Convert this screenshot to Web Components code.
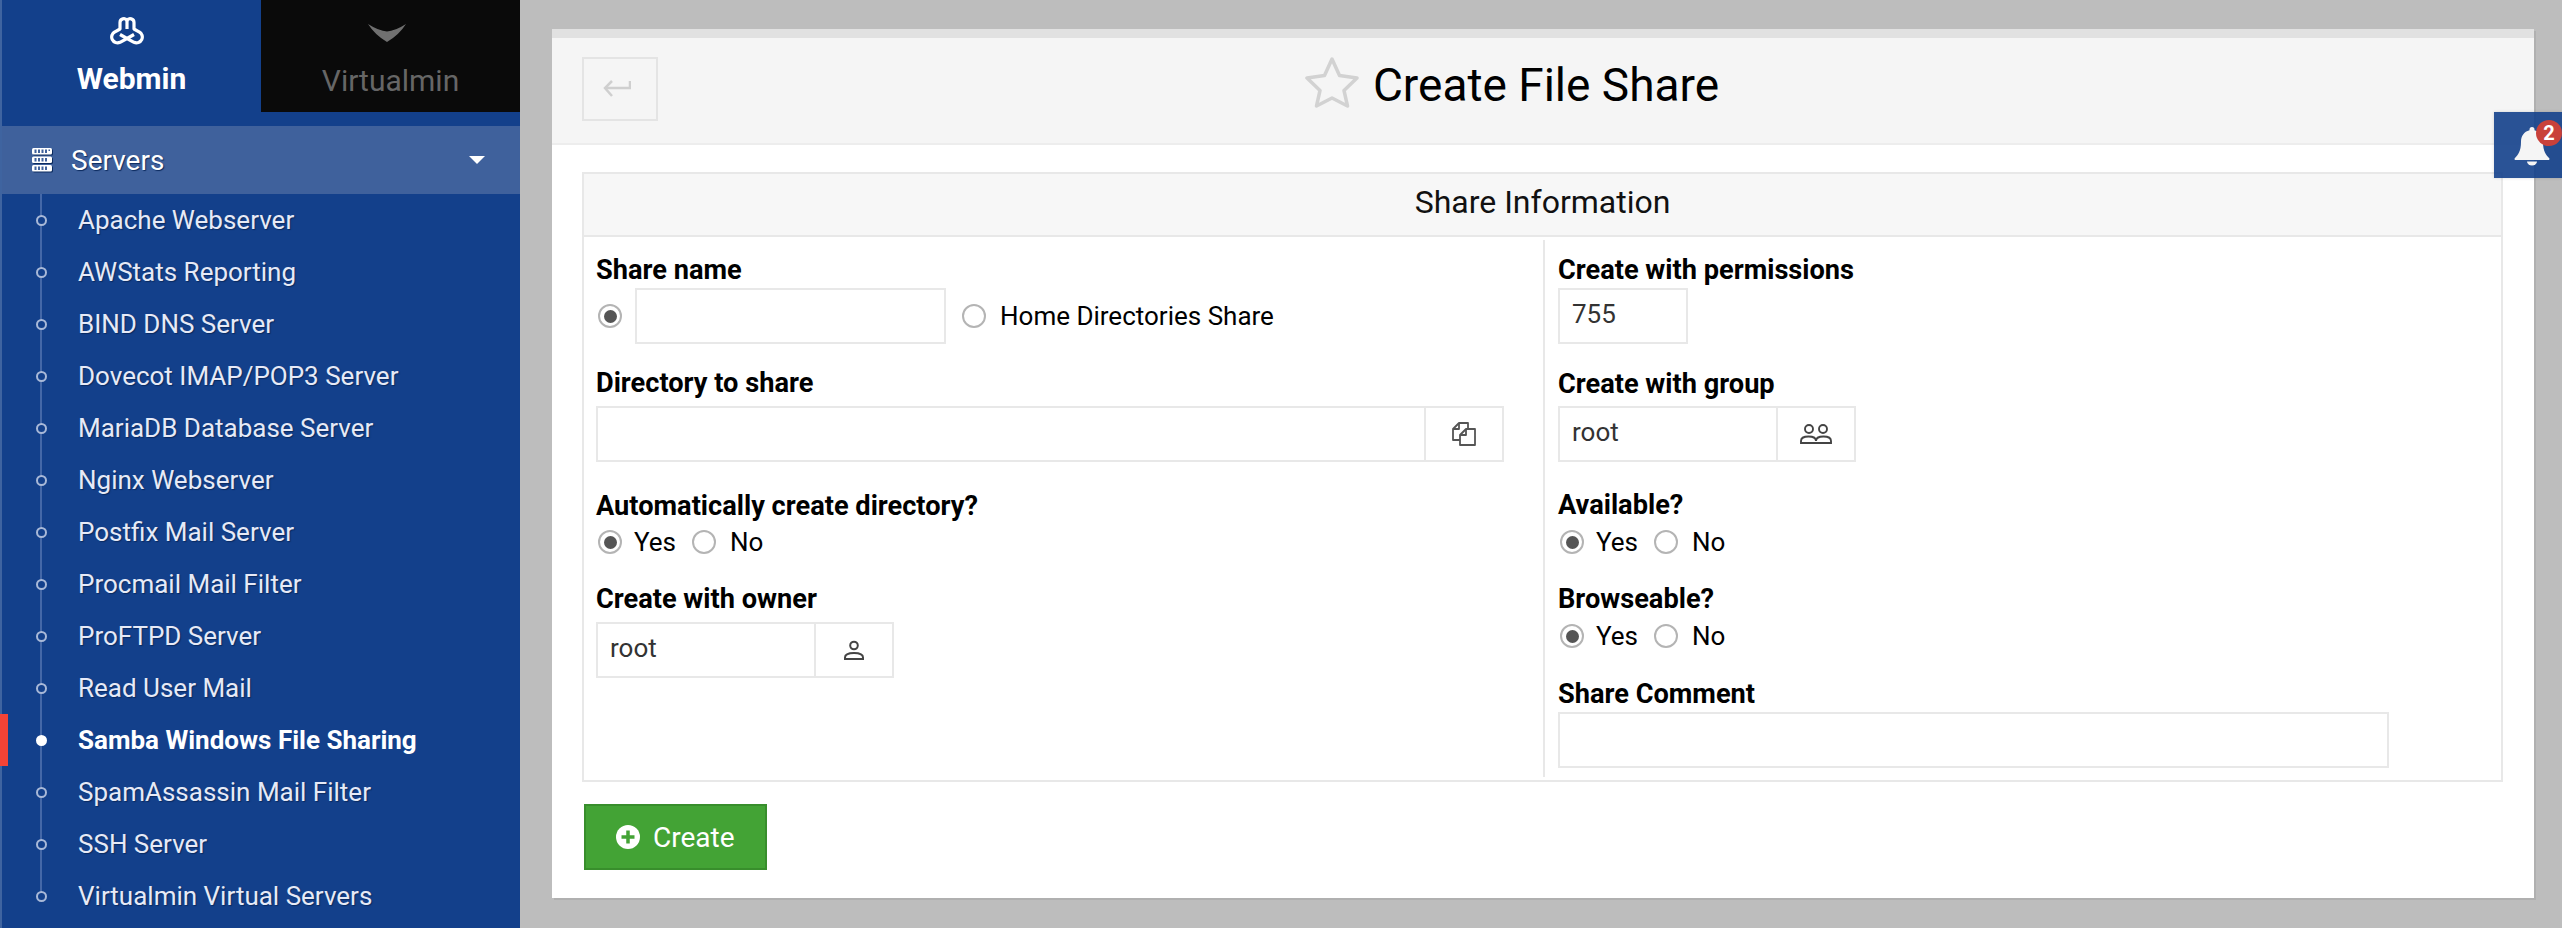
<!DOCTYPE html>
<html><head><meta charset="utf-8"><title>Create File Share</title>
<style>
html,body{margin:0;padding:0;height:928px;overflow:hidden;background:#bdbdbd;font-family:Roboto,"Liberation Sans",sans-serif;font-size:26px}
</style></head><body>
<wm-app>
  <wm-sidebar slot="side">
    <wm-tab slot="tabs" active label="Webmin"><svg style="margin-right:10px" viewBox="0 0 34 31" width="34" height="31" fill="none" stroke="#fff" stroke-width="3.2" stroke-linejoin="round"><path d="M10 13V6.500a3.800 3.800 0 0 1 7-2 3.800 3.800 0 0 1 7 2V13l5 2.800A5.500 5.500 0 0 1 24 26.300L17 22.500 10 26.300A5.500 5.500 0 0 1 5 15.800z"/><path d="M17 4.500V13"/><path d="M10 18.500l7 4 7-4"/></svg></wm-tab>
    <wm-tab slot="tabs" label="Virtualmin"><svg style="margin-right:8px" viewBox="0 0 38 19" width="38" height="19"><path d="M0 1 Q11 8 19 8.500 Q27 8 38 1 Q31 12 19 19 Q7 12 0 1z" fill="#707070"/></svg></wm-tab>
    <wm-nav-head slot="head">Servers</wm-nav-head>
    <wm-nav-item>Apache Webserver</wm-nav-item>
    <wm-nav-item>AWStats Reporting</wm-nav-item>
    <wm-nav-item>BIND DNS Server</wm-nav-item>
    <wm-nav-item>Dovecot IMAP/POP3 Server</wm-nav-item>
    <wm-nav-item>MariaDB Database Server</wm-nav-item>
    <wm-nav-item>Nginx Webserver</wm-nav-item>
    <wm-nav-item>Postfix Mail Server</wm-nav-item>
    <wm-nav-item>Procmail Mail Filter</wm-nav-item>
    <wm-nav-item>ProFTPD Server</wm-nav-item>
    <wm-nav-item>Read User Mail</wm-nav-item>
    <wm-nav-item active>Samba Windows File Sharing</wm-nav-item>
    <wm-nav-item>SpamAssassin Mail Filter</wm-nav-item>
    <wm-nav-item>SSH Server</wm-nav-item>
    <wm-nav-item>Virtualmin Virtual Servers</wm-nav-item>
  </wm-sidebar>
  <wm-card heading="Create File Share">
    <wm-section heading="Share Information">
      <div slot="left">
        <wm-field label="Share name" style="--gap:4px;--after:23px">
          <wm-row>
            <wm-radio checked style="--l:2px"></wm-radio>
            <wm-input style="--w:311px;margin:0 16px 0 13px"></wm-input>
            <wm-radio></wm-radio>
            <wm-text style="margin-left:14px">Home Directories Share</wm-text>
          </wm-row>
        </wm-field>
        <wm-field label="Directory to share" style="--gap:9px;--after:28px">
          <wm-input style="--w:908px" icon="copy"></wm-input>
        </wm-field>
        <wm-field label="Automatically create directory?" style="--gap:7px;--after:26px">
          <wm-yesno></wm-yesno>
        </wm-field>
        <wm-field label="Create with owner" style="--gap:9px;--after:0px">
          <wm-input style="--w:298px" icon="user" value="root"></wm-input>
        </wm-field>
      </div>
      <div slot="right">
        <wm-field label="Create with permissions" style="--gap:4px;--after:24px">
          <wm-input style="--w:130px" value="755"></wm-input>
        </wm-field>
        <wm-field label="Create with group" style="--gap:8px;--after:27px">
          <wm-input style="--w:298px" icon="group" value="root"></wm-input>
        </wm-field>
        <wm-field label="Available?" style="--gap:8px;--after:26px">
          <wm-yesno></wm-yesno>
        </wm-field>
        <wm-field label="Browseable?" style="--gap:8px;--after:27px">
          <wm-yesno></wm-yesno>
        </wm-field>
        <wm-field label="Share Comment" style="--gap:4px;--after:0px">
          <wm-input style="--w:831px"></wm-input>
        </wm-field>
      </div>
    </wm-section>
    <wm-button>Create</wm-button>
  </wm-card>
  <wm-bell count="2"></wm-bell>
</wm-app>
<script>
function def(name, css, html){
  customElements.define(name, class extends HTMLElement{
    constructor(){super();this.attachShadow({mode:'open'});}
    connectedCallback(){
      if(this._d)return;this._d=1;
      const h=typeof html==='function'?html(this):html;
      this.shadowRoot.innerHTML='<style>'+css+'</style>'+h;
    }
  });
}
const ICONS={
 copy:'<svg viewBox="0 0 24 24" width="24" height="24" fill="none" stroke="#555" stroke-width="1.800" stroke-linejoin="round"><path d="M16 7V1H7L1 7V18H8"/><path d="M7 1V7H1"/><path d="M14 7H23V23H8V13z"/><path d="M14 7V13H8"/></svg>',
 user:'<svg viewBox="0 0 20 20" width="20" height="20" fill="none" stroke="#444" stroke-width="2"><circle cx="10" cy="5.500" r="3.800"/><path d="M1 19v-1.500c0-3 3-4.500 9-4.500s9 1.500 9 4.500V19z"/></svg>',
 group:'<svg viewBox="0 0 32 20" width="32" height="20" fill="none" stroke="#444" stroke-width="1.900"><circle cx="9" cy="5" r="4"/><circle cx="23" cy="5" r="4"/><path d="M1 19v-2c0-3 3-4.500 7.500-4.500 4 0 7.500 1.500 7.500 4.500 0-3 3.500-4.500 7.500-4.500 4.500 0 7.500 1.500 7.500 4.500v2z"/></svg>'
};
def('wm-app',':host{display:flex;height:928px;width:2562px;position:relative}','<slot name="side"></slot><slot></slot>');
def('wm-sidebar',
 `:host{display:block;flex:none;width:520px;height:928px;box-sizing:border-box;background:#13408b;overflow:hidden}
  .tabs{display:flex;padding-left:2px;height:112px}
  .edge{position:absolute;left:0;top:0;width:2px;height:928px;background:#3f64a0}
  .list{display:block;position:relative}
  .line{position:absolute;left:40px;top:0;width:2px;height:704px;background:#4468a8}
  .head{margin-top:14px}`,
 `<div class="edge"></div><div class="tabs"><slot name="tabs"></slot></div><div class="head"><slot name="head"></slot></div><div class="list"><div class="line"></div><slot></slot></div>`);
def('wm-tab',
 `:host{display:flex;flex:1;flex-direction:column;align-items:center;height:112px;box-sizing:border-box;background:#0a0a0a;color:#666;font-weight:400;font-size:30px;line-height:34px}
  :host([active]){background:#13408b;color:#fff;font-weight:700}
  .ic{height:64px;display:flex;align-items:center;justify-content:center}
  :host([active]) .ic{height:62px}
  .t{display:block}`,
 el=>`<div class="ic"><slot></slot></div><div class="t">${el.getAttribute('label')}</div>`);
def('wm-nav-head',
 `:host{display:flex;align-items:center;height:68px;padding:0 35px 0 32px;color:#fff;background:#3f619c;font-size:28px;text-shadow:1px 1px 1px #0b2a5e}
  svg{flex:none;margin-right:19px;filter:drop-shadow(1px 1px 0 #0b2a5e)}
  .t{flex:1}
  .c{width:0;height:0;border:7px solid transparent;border-top:8px solid #fff;border-bottom:0;border-left-width:8px;border-right-width:8px}`,
 `<svg width="20" height="24" viewBox="0 0 20 24" fill="#fff"><rect y="0" width="20" height="6.500" rx="1.500"/><rect y="8.500" width="20" height="6.500" rx="1.500"/><rect y="17" width="20" height="6.500" rx="1.500"/><g fill="#3f619c"><rect x="2.500" y="1.500" width="2" height="3.500"/><rect x="6" y="1.500" width="2" height="3.500"/><rect x="9.500" y="1.500" width="2" height="3.500"/><rect x="13" y="1.500" width="2" height="3.500"/><rect x="16.500" y="1.500" width="1.500" height="1.500"/><rect x="2.500" y="10" width="2" height="3.500"/><rect x="6" y="10" width="2" height="3.500"/><rect x="9.500" y="10" width="2" height="3.500"/><rect x="13" y="10" width="2" height="3.500"/><rect x="2.500" y="18.500" width="2" height="3.500"/><rect x="6" y="18.500" width="2" height="3.500"/><rect x="9.500" y="18.500" width="2" height="3.500"/><rect x="13" y="18.500" width="2" height="3.500"/></g></svg><span class="t"><slot></slot></span><span class="c"></span>`);
def('wm-nav-item',
 `:host{display:flex;align-items:center;height:52px;position:relative;padding-left:78px;color:#e6eaf7;font-size:26px;text-shadow:1px 1px 1px #0a2a60;white-space:nowrap}
  :host::before{content:"";position:absolute;left:36px;top:21px;width:7px;height:7px;border:2px solid #a9b9d8;border-radius:50%;background:#13408b}
  :host([active]){color:#fff;font-weight:700;text-shadow:none}
  :host([active])::before{background:#fff;border-color:#fff}
  :host([active])::after{content:"";position:absolute;left:0;top:0;width:8px;height:52px;background:#f44336}`,
 `<slot></slot>`);
def('wm-card',
 `:host{display:block;flex:none;width:1982px;height:869px;margin:29px 0 0 32px;background:#fff;box-shadow:2px 2px 0 #b0b0b0;box-sizing:border-box}
  .top{height:9px;background:#e1e1e1}
  .hd{display:flex;height:105px;background:#f5f5f5;border-bottom:2px solid #ededed;padding:0 168px 0 30px}
  .back{flex:none;width:76px;height:64px;box-sizing:border-box;margin-top:19px;border:2px solid #e4e4e4;display:flex;align-items:center;justify-content:center}
  .back svg{margin-right:6px}
  .ti{flex:1;display:flex;align-items:center;justify-content:center;padding-bottom:11px;font-size:46px;color:#000}
  .ti svg{margin:-6px 14px 0 0;flex:none}
  .bd{padding:27px 31px 0 30px}`,
 el=>`<div class="top"></div><div class="hd"><div class="back"><svg width="28" height="20" viewBox="0 0 28 20" fill="none" stroke="#cfcfcf" stroke-width="2.500"><path d="M27 2v7H2"/><path d="M9 2L2 9l7 8"/></svg></div><div class="ti"><svg width="54" height="52" viewBox="0 0 54 52" fill="none" stroke="#d2d2d2" stroke-width="3.500" stroke-linejoin="round"><path d="M27 3l7.500 16.500L52 22 39 34.500 42.500 50 27 42 11.500 50 15 34.500 2 22l17.500-2.500z"/></svg><span>${el.getAttribute('heading')}</span></div></div><div class="bd"><slot></slot></div>`);
def('wm-section',
 `:host{display:block;border:2px solid #e8e8e8;box-sizing:border-box;height:610px}
  .h{height:56px;padding-bottom:5px;background:#f7f7f7;border-bottom:2px solid #e8e8e8;display:flex;align-items:center;justify-content:center;font-size:32px;color:#111}
  .g{display:grid;grid-template-columns:959px 1fr;height:543px}
  .l{padding:17px 12px 0 12px}
  .r{margin:3px 0;border-left:2px solid #e8e8e8;padding:14px 0 0 13px}`,
 el=>`<div class="h">${el.getAttribute('heading')}</div><div class="g"><div class="l"><slot name="left"></slot></div><div class="r"><slot name="right"></slot></div></div>`);
def('wm-field',
 `:host{display:block;margin-bottom:var(--after,0)}
  .l{font-weight:700;font-size:27.200px;line-height:32px;height:30px;color:#000;margin-bottom:var(--gap,4px);white-space:nowrap}`,
 el=>`<div class="l">${el.getAttribute('label')}</div><slot></slot>`);
def('wm-row',`:host{display:flex;align-items:center}`,`<slot></slot>`);
def('wm-text',`:host{display:inline-block;font-size:26px;line-height:30px;color:#000;white-space:nowrap}`,`<slot></slot>`);
def('wm-radio',
 `:host{display:inline-flex;flex:none;width:24px;height:24px;box-sizing:border-box;border:2px solid #b4b4b4;border-radius:50%;background:#fff;align-items:center;justify-content:center;margin-left:var(--l,0)}
  i{display:none;width:13px;height:13px;border-radius:50%;background:#555}
  :host([checked]) i{display:block}`,
 `<i></i>`);
def('wm-yesno',
 `:host{display:flex;align-items:center;height:30px;padding-left:2px;font-size:26px;color:#000}
  span{margin:0 16px 0 12px}
  .n{margin:0 0 0 14px}`,
 `<wm-radio checked></wm-radio><span>Yes</span><wm-radio></wm-radio><span class="n">No</span>`);
def('wm-input',
 `:host{display:flex;width:var(--w,300px);height:56px;box-sizing:border-box;border:2px solid #e8e8e8;background:#fff;flex:none;color:#333;font-size:26px}
  .v{flex:1;padding:0 12px;line-height:48px}
  .b{flex:none;width:76px;border-left:2px solid #e8e8e8;display:flex;align-items:center;justify-content:center}`,
 el=>{const i=el.getAttribute('icon');return `<div class="v">${el.getAttribute('value')||''}</div>`+(i?`<div class="b">${ICONS[i]}</div>`:'');});
def('wm-button',
 `:host{display:inline-flex;align-items:center;height:66px;margin:22px 0 0 2px;padding:0 30px 0 30px;box-sizing:border-box;background:#43a335;border:2px solid #388e2c;color:#fff;font-size:28px}
  svg{margin-right:13px}`,
 `<svg width="24" height="24" viewBox="0 0 24 24"><circle cx="12" cy="12" r="12" fill="#fff"/><path d="M12 5.500v13M5.500 12h13" stroke="#43a335" stroke-width="3.500"/></svg><slot></slot>`);
def('wm-bell',
 `:host{display:block;position:absolute;left:2494px;top:112px;width:68px;height:66px;background:rgba(19,64,139,.9);box-shadow:0 0 3px rgba(0,0,0,.15)}
  svg{position:absolute;left:20px;top:14px}
  b{position:absolute;left:42px;top:8px;width:26px;height:26px;border-radius:50%;background:#c9413a;color:#fff;font-size:20px;line-height:26px;text-align:center}`,
 el=>`<svg width="36" height="40" viewBox="0 0 36 40" fill="#f5f5f5"><path d="M18 1a2.500 2.500 0 0 1 2.500 2.500v.7C26 5.500 29 10 29 16c0 9 3 13 6 16 1 1 .5 2-1 2H2c-1.500 0-2-1-1-2 3-3 6-7 6-16 0-6 3-10.500 8.500-11.800v-.7A2.500 2.500 0 0 1 18 1z"/><path d="M13 35.500a5 4 0 0 0 10 0z"/></svg><b>${el.getAttribute('count')}</b>`);
</script>
</body></html>
